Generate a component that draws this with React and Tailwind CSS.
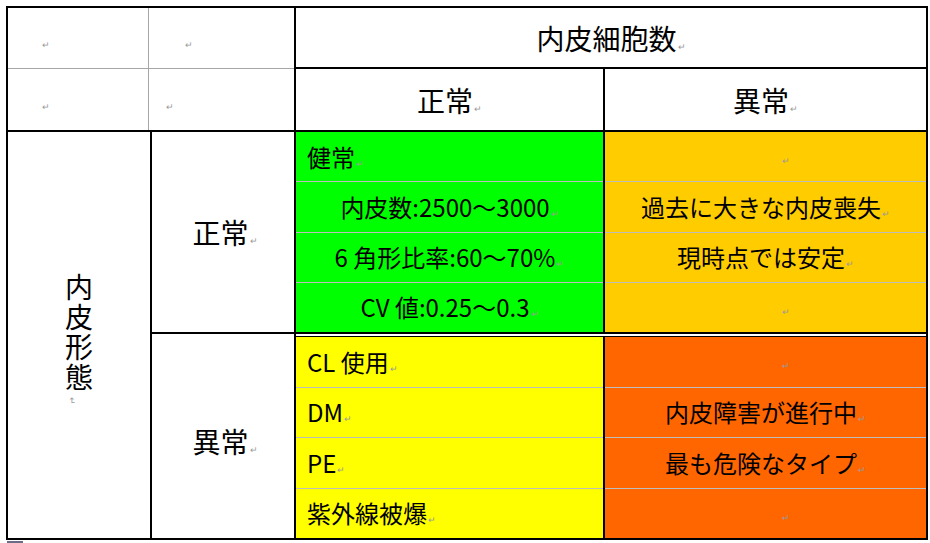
const Mark = ({ className = "" }) => (
  <span className={`text-[9px] leading-none text-[#9a9a9a] ${className}`}>↵</span>
);

const Row = ({ text, left, first }) => (
  <div
    className={`flex flex-1 items-center ${left ? "justify-start pl-[11px]" : "justify-center"} ${first ? "" : "border-t border-[#bdbdbd]"}`}
  >
    {text ? (
      <span className="text-[24px] leading-none text-black">
        {text}
        <Mark className="ml-[1px]" />
      </span>
    ) : (
      <Mark className="ml-[40px] mt-[8px]" />
    )}
  </div>
);

const Group = ({ rows, bg, className = "" }) => (
  <div className={`flex flex-col ${bg} ${className}`}>
    {rows.map((r, i) => (
      <Row key={i} text={r.text} left={r.left} first={i === 0} />
    ))}
  </div>
);

const greenRows = [
  { text: "健常", left: true },
  { text: "内皮数:2500～3000" },
  { text: "6 角形比率:60～70%" },
  { text: "CV 値:0.25～0.3" },
];
const amberRows = [
  { text: "" },
  { text: "過去に大きな内皮喪失" },
  { text: "現時点では安定" },
  { text: "" },
];
const yellowRows = [
  { text: "CL 使用", left: true },
  { text: "DM", left: true },
  { text: "PE", left: true },
  { text: "紫外線被爆", left: true },
];
const orangeRows = [
  { text: "" },
  { text: "内皮障害が進行中" },
  { text: "最も危険なタイプ" },
  { text: "" },
];

export default function App() {
  return (
    <div className="w-[930px] h-[543px] bg-white font-['Noto_Sans_CJK_JP',sans-serif] text-black overflow-hidden">
      <div className="ml-[6px] mt-[6px] w-[922px] h-[534px] border-2 border-black flex flex-col">
        {/* header */}
        <div className="flex h-[122px]">
          <div className="w-[286px] flex flex-col">
            <div className="flex h-[61px] border-b border-[#a6a6a6]">
              <div className="w-[140px] flex items-center pl-[34px] pt-[12px]">
                <Mark />
              </div>
              <div className="flex-1 border-l border-[#a6a6a6] flex items-center pl-[36px] pt-[12px]">
                <Mark />
              </div>
            </div>
            <div className="flex flex-1">
              <div className="w-[140px] flex items-center pl-[34px] pt-[14px]">
                <Mark />
              </div>
              <div className="flex-1 border-l border-[#a6a6a6] flex items-center pl-[17px] pt-[14px]">
                <Mark />
              </div>
            </div>
          </div>
          <div className="flex-1 border-l-2 border-black flex flex-col">
            <div className="h-[61px] border-b-2 border-black flex items-center justify-center">
              <span className="text-[28px] leading-none">
                内皮細胞数
                <Mark className="ml-[1px]" />
              </span>
            </div>
            <div className="flex flex-1">
              <div className="w-[307px] flex items-center justify-center">
                <span className="text-[28px] leading-none">
                  正常
                  <Mark className="ml-[1px]" />
                </span>
              </div>
              <div className="flex-1 border-l-2 border-black flex items-center justify-center">
                <span className="text-[28px] leading-none">
                  異常
                  <Mark className="ml-[1px]" />
                </span>
              </div>
            </div>
          </div>
        </div>

        {/* body */}
        <div className="flex flex-1 border-t-2 border-black">
          <div className="w-[142px] flex flex-col items-center justify-center pt-[8px]">
            <span className="[writing-mode:vertical-rl] text-[28px] leading-none tracking-[2px]">
              内皮形態
            </span>
            <span className="text-[9px] leading-none text-[#9a9a9a] rotate-90 -ml-[14px] mt-[3px]">↵</span>
          </div>
          <div className="w-[144px] border-l-2 border-black flex flex-col">
            <div className="h-[202px] border-b-2 border-black flex items-center justify-center pl-[4px]">
              <span className="text-[28px] leading-none">
                正常
                <Mark className="ml-[1px]" />
              </span>
            </div>
            <div className="flex-1 flex items-center justify-center pl-[4px] pt-[10px]">
              <span className="text-[28px] leading-none">
                異常
                <Mark className="ml-[1px]" />
              </span>
            </div>
          </div>
          <div className="flex-1 border-l-2 border-black flex flex-col">
            <div className="flex h-[202px] border-b-2 border-black">
              <Group rows={greenRows} bg="bg-[#00ff00]" className="w-[307px]" />
              <Group rows={amberRows} bg="bg-[#ffcc00]" className="flex-1 border-l-2 border-black" />
            </div>
            <div className="h-[2px] bg-white" />
            <div className="flex flex-1 border-t border-black">
              <Group rows={yellowRows} bg="bg-[#ffff00]" className="w-[307px]" />
              <Group rows={orangeRows} bg="bg-[#ff6600]" className="flex-1 border-l-2 border-black" />
            </div>
          </div>
        </div>
      </div>
      <div className="ml-[7px] mt-[1px] w-[16px] h-[2px] bg-[#6b6b85]" />
    </div>
  );
}
